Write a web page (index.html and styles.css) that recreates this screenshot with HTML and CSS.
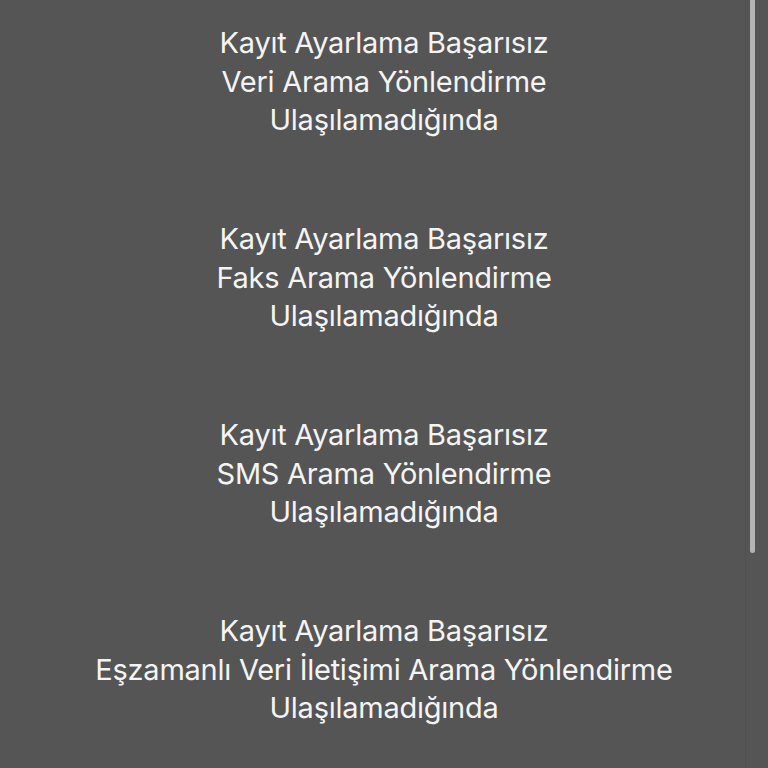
FILE: index.html
```html
<!DOCTYPE html>
<html lang="tr">
<head>
  <meta charset="UTF-8">
  <meta name="viewport" content="width=device-width, initial-scale=1.0">
  <title>Arama Yönlendirme</title>
  <link rel="stylesheet" href="styles.css">
</head>
<body>
  <main class="list">
    <p class="item">Kayıt Ayarlama Başarısız<br>Veri Arama Yönlendirme<br>Ulaşılamadığında</p>
    <p class="item">Kayıt Ayarlama Başarısız<br>Faks Arama Yönlendirme<br>Ulaşılamadığında</p>
    <p class="item">Kayıt Ayarlama Başarısız<br>SMS Arama Yönlendirme<br>Ulaşılamadığında</p>
    <p class="item">Kayıt Ayarlama Başarısız<br>Eşzamanlı Veri İletişimi Arama Yönlendirme<br>Ulaşılamadığında</p>
  </main>
  <div class="scroll-track"></div>
  <div class="scroll-thumb"></div>
</body>
</html>
```

FILE: styles.css
```css
:root {
  --bg-color: #555555;
  --text-color: #f4f4f4;
  --thumb-color: #b4b4b4;
}

html, body {
  height: 100%;
}

body {
  margin: 0;
  padding: 0;
  background: var(--bg-color);
  color: var(--text-color);
  font-family: Inter, "Open Sans", sans-serif;
  overflow: hidden;
}

.list {
  display: flex;
  flex-direction: column;
  gap: 80.5px;
  padding-top: 24px;
}

.item {
  margin: 0;
  text-align: center;
  font-size: 29px;
  line-height: 38.5px;
  letter-spacing: -0.25px;
}

/* scroll indicator on the right edge */
.scroll-track {
  position: fixed;
  top: 0;
  bottom: 0;
  left: 745px;
  width: 1px;
  background: rgba(0, 0, 0, 0.06);
}

.scroll-thumb {
  position: fixed;
  top: -6px;
  left: 750px;
  width: 5px;
  height: 559px;
  border-radius: 3px;
  background: var(--thumb-color);
}
```
